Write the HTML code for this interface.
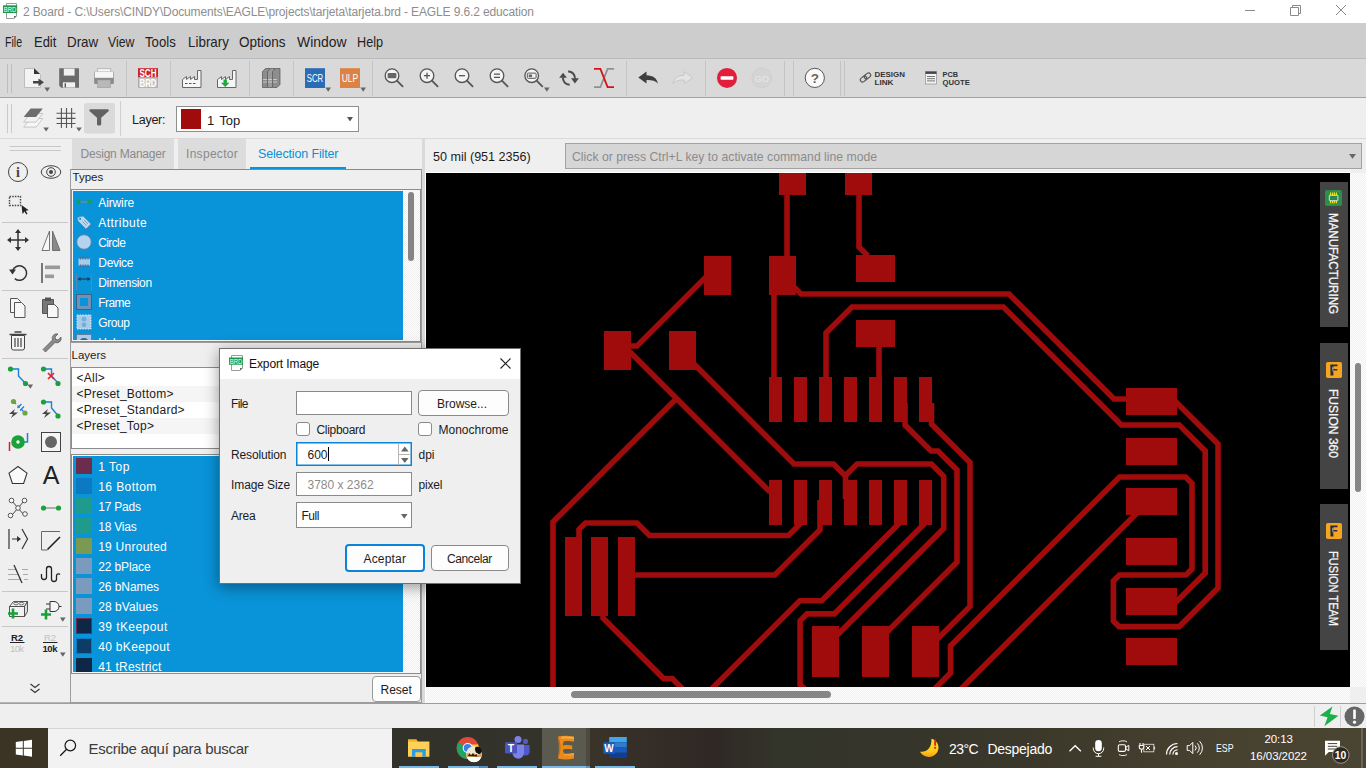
<!DOCTYPE html>
<html lang="en">
<head>
<meta charset="utf-8">
<title>2 Board - EAGLE 9.6.2 education</title>
<style>
*{box-sizing:border-box;margin:0;padding:0}
html,body{width:1366px;height:768px;overflow:hidden}
body{position:relative;background:#efefef;font-family:"Liberation Sans",sans-serif;font-size:12px;color:#1c1c1c;line-height:1}
.a{position:absolute}
.t{position:absolute;white-space:nowrap;line-height:1}
svg{position:absolute;overflow:visible}
/* title bar */
#title{left:0;top:0;width:1366px;height:23px;background:#fff}
/* menubar */
#menu{left:0;top:23px;width:1366px;height:36px;background:#cdcdcd;border-bottom:1px solid #b9b9b9}
#menu .t{top:10.500px;font-size:15px;color:#222;transform-origin:0 0}
/* toolbars */
#tb1{left:0;top:59px;width:1366px;height:39px;background:#d9d9d9;border-bottom:1px solid #a3a3a3}
#tb2{left:0;top:98px;width:1366px;height:41px;background:#efefef;border-bottom:1px solid #d9d9d9}
.sep{position:absolute;width:1px;background:#bcbcbc}
/* left tools */
#ltools{left:0;top:139px;width:70px;height:564px;background:#efefef;border-bottom:1px solid #b5b5b5}
.hs{position:absolute;height:1px;background:#c4c4c4;left:3px;width:65px}
/* panel */
#panel{left:70px;top:139px;width:352px;height:564px;background:#efefef}
.li{font-size:12px;color:#fff;letter-spacing:-.1px}
/* canvas */
#canvas{left:426px;top:173px;width:924px;height:514px;background:#000;overflow:hidden}
/* status */
#status{left:0;top:703px;width:1366px;height:25px;background:#efefef;border-top:1px solid #9d9d9d}
/* taskbar */
#task{left:0;top:728px;width:1366px;height:40px;background:linear-gradient(90deg,#3b3424 0,#3b3424 3.600%,#32322a 29%,#33332a 40%,#3a332a 43.500%,#2f2824 52%,#33342a 57%,#36352a 68%,#3f3b2c 80%,#474130 90%,#4a4432 100%)}
</style>
</head>
<body>
<!-- TITLE -->
<div id="title" class="a">
<svg style="left:3px;top:3px" width="15" height="16" viewBox="0 0 15 16"><path d="M3.500.500h10v12.500l-2.500 2.500h-7.500z" fill="#fff" stroke="#9a9a9a"/><path d="M13.500 13h-2.500v2.500z" fill="#666"/><rect x="0" y="2.300" width="14.200" height="7.700" fill="#1c9a4a"/><text x="7.100" y="8.700" font-size="6.800" font-family="Liberation Sans,sans-serif" fill="#fff" text-anchor="middle" textLength="12.500" lengthAdjust="spacingAndGlyphs">BRD</text></svg>
<span class="t" style="left:23px;top:6px;font-size:12px;color:#8d8d8d;letter-spacing:-0.13px">2 Board - C:\Users\CINDY\Documents\EAGLE\projects\tarjeta\tarjeta.brd - EAGLE 9.6.2 education</span>
<svg style="left:1245px;top:5px" width="102" height="11" viewBox="0 0 102 11" fill="none" stroke="#8a8a8a" stroke-width="1"><path d="M0 5.5h10"/><path d="M45.5 2.5h8v8h-8z"/><path d="M47.5 2.5v-2h8v8h-2"/><path d="M91 0l10 10M101 0l-10 10"/></svg>
</div>
<!-- MENU -->
<div id="menu" class="a">
<span class="t" style="left:5.3px;transform:scaleX(0.707)">File</span><span class="t" style="left:33.6px;transform:scaleX(0.864)">Edit</span><span class="t" style="left:66.6px;transform:scaleX(0.891)">Draw</span><span class="t" style="left:108px;transform:scaleX(0.818)">View</span><span class="t" style="left:145px;transform:scaleX(0.877)">Tools</span><span class="t" style="left:187.5px;transform:scaleX(0.893)">Library</span><span class="t" style="left:239px;transform:scaleX(0.9)">Options</span><span class="t" style="left:296.5px;transform:scaleX(0.929)">Window</span><span class="t" style="left:356.5px;transform:scaleX(0.844)">Help</span>
</div>
<!-- TB1 -->
<div id="tb1" class="a">
<svg style="left:0;top:-1px" width="1366" height="40" viewBox="0 0 1366 40" font-family="Liberation Sans,sans-serif">
<path d="M7.5 6v29M11.5 6v29" stroke="#bdbdbd"/>
<g stroke="#c3c3c3"><path d="M126.5 3v35M170.5 3v35M249.5 3v35M293.5 3v35M372.5 3v35M626.5 3v35M705.5 3v35M784.5 3v35M793.5 3v35M840.5 3v35M844.5 3v35"/></g>
<!-- new -->
<path d="M24.5 10.5h9.5l6.5 6v13h-16z" fill="#f3f3f3" stroke="#bdbdbd"/><path d="M34 10.3l6 5.6h-6z" fill="#333"/><path d="M33 23h5.5v-2.6l5.4 3.9-5.4 3.9v-2.6H33z" fill="#444"/><path d="M44.4 29.5h5.6l-2.8 4.2z" fill="#666"/>
<!-- save -->
<path d="M59.2 10.2h19.8v19.6H61.2l-2-2z" fill="#6b6b6b"/><rect x="63.8" y="10.6" width="10.8" height="7" fill="#f1f1f1"/><rect x="62.9" y="24.3" width="12.2" height="5.2" fill="#f1f1f1"/><rect x="64.6" y="25.3" width="1.4" height="4" fill="#555"/>
<!-- print -->
<rect x="97.5" y="10.5" width="13.2" height="7.5" fill="#f2f2f2" stroke="#bbb"/><rect x="94.2" y="13.6" width="19.6" height="12.4" rx="1" fill="#8a8a8a"/><rect x="94.8" y="13.6" width="18.4" height="6.2" fill="#f6f6f6"/><rect x="97.6" y="22" width="13" height="7.6" fill="#b8b8b8" stroke="#9a9a9a" stroke-width=".6"/>
<!-- sch/brd -->
<rect x="138" y="10.200" width="20" height="9.300" fill="#c9202a"/><rect x="138.400" y="19.500" width="19.200" height="9.800" fill="#c6c6c6" stroke="#a5a5a5" stroke-width=".8"/><text x="148" y="18.700" font-size="10" font-weight="700" fill="#fff" text-anchor="middle" textLength="17" lengthAdjust="spacingAndGlyphs">SCH</text><text x="148" y="28.700" font-size="10" font-weight="700" fill="#fff" text-anchor="middle" textLength="17" lengthAdjust="spacingAndGlyphs">BRD</text>
<!-- factory 1 -->
<path d="M182.5 29.5v-8l4-3v3l4-3v3l4-3v3h3v-9h3.5v17z" fill="#f6f6f6" stroke="#666" stroke-width="1"/><path d="M185 25.5h2.5M189 25.5h2.5M193 25.5h2.5" stroke="#555" stroke-width="1.2"/>
<!-- factory 2 -->
<path d="M217.5 29.5v-8l4-3v3l4-3v3l4-3v3h3v-9h3.5v17z" fill="#f6f6f6" stroke="#666" stroke-width="1"/><path d="M223.5 21.5h3.4v3.2h2.6l-4.3 4.4-4.3-4.4h2.6z" fill="#1faa3c"/>
<!-- books -->
<g stroke="#555" stroke-width=".7"><path d="M262.5 13.5l3-3h4.5v16l-3 3h-4.5z" fill="#8d8d8d"/><path d="M267.5 13.5l3-3h4.5v16l-3 3h-4.5z" fill="#9a9a9a"/><path d="M272.5 13.5l3-3h4.5v16l-3 3h-4.5z" fill="#8d8d8d"/></g><path d="M263 21.5h4M268 21.5h4M273 21.5h4M263 24h4M268 24h4M273 24h4" stroke="#d5d5d5" stroke-width=".8"/>
<!-- scr ulp -->
<rect x="305" y="10.2" width="20" height="19.8" fill="#2b6cb7"/><text x="315" y="24.2" font-size="10.5" fill="#fff" text-anchor="middle" textLength="16.5" lengthAdjust="spacingAndGlyphs">SCR</text><path d="M325.4 29.6h5.6l-2.8 4.2z" fill="#666"/>
<rect x="340" y="10.2" width="20" height="19.8" fill="#dc8242"/><text x="350" y="24.2" font-size="10.5" fill="#fff" text-anchor="middle" textLength="16.5" lengthAdjust="spacingAndGlyphs">ULP</text><path d="M360.4 29.6h5.6l-2.8 4.2z" fill="#666"/>
<!-- zoom icons -->
<g transform="translate(392 17.7)"><circle r="6.8" fill="#f4f4f4" stroke="#555" stroke-width="1.3"/><path d="M4.9 4.9L10.6 10.6" stroke="#555" stroke-width="1.8" stroke-linecap="round"/><rect x="-4.4" y="-2.8" width="8.8" height="5.4" rx="1" fill="#666"/></g>
<g transform="translate(427 17.7)"><circle r="6.8" fill="#f4f4f4" stroke="#555" stroke-width="1.3"/><path d="M4.9 4.9L10.6 10.6" stroke="#555" stroke-width="1.8" stroke-linecap="round"/><path d="M-3 0h6M0 -3v6" stroke="#555" stroke-width="1.3"/></g>
<g transform="translate(462 17.7)"><circle r="6.8" fill="#f4f4f4" stroke="#555" stroke-width="1.3"/><path d="M4.9 4.9L10.6 10.6" stroke="#555" stroke-width="1.8" stroke-linecap="round"/><path d="M-3 0h6" stroke="#555" stroke-width="1.3"/></g>
<g transform="translate(497 17.7)"><circle r="6.8" fill="#f4f4f4" stroke="#555" stroke-width="1.3"/><path d="M4.9 4.9L10.6 10.6" stroke="#555" stroke-width="1.8" stroke-linecap="round"/><path d="M-3 -1.6h6M-3 1.6h6" stroke="#555" stroke-width="1.3"/></g>
<g transform="translate(531.7 17.7)"><circle r="6.8" fill="#f4f4f4" stroke="#555" stroke-width="1.3"/><path d="M4.9 4.9L10.6 10.6" stroke="#555" stroke-width="1.8" stroke-linecap="round"/><rect x="-4.4" y="-2.6" width="8.8" height="5.2" rx="1" fill="none" stroke="#555" stroke-width="1"/><rect x="-3" y="-1.2" width="3.4" height="2.6" fill="#666"/></g><path d="M544 29.6h5.6l-2.8 4.2z" fill="#666"/>
<!-- refresh -->
<g fill="none" stroke="#4a4a4a" stroke-width="2"><path d="M568.100 13.600A6.600 6.600 0 0 1 575 20.600"/><path d="M569.700 26.700A6.600 6.600 0 0 1 563 19.400"/></g><path d="M571 20.300h7.900l-3.950 5.200z" fill="#4a4a4a"/><path d="M559.200 19.700h7.700l-3.850-4.900z" fill="#4a4a4a"/>
<!-- X -->
<path d="M614 10.900H607.600L600.400 29.100H594" fill="none" stroke="#8f8f8f" stroke-width="1.700"/><path d="M594 10.900H600.400L607.600 29.100H614" fill="none" stroke="#d41414" stroke-width="1.800"/>
<!-- undo redo -->
<path d="M638.3 19.6l8.2-6v3.6c6.5.2 10.4 3 11.3 8.2-2.600-2.700-6.200-3.600-11.300-3.400v3.600z" fill="#3d3d3d"/>
<path d="M692.500 19.600l-8.200-6v3.600c-6.500.2-10.400 3-11.300 8.200 2.600-2.700 6.200-3.600 11.300-3.400v3.600z" fill="#e4e4e4" stroke="#c2c2c2" stroke-width=".8"/>
<!-- stop go -->
<circle cx="727" cy="19.900" r="10" fill="#e01f3d"/><rect x="720.6" y="18.300" width="12.8" height="3.400" rx=".6" fill="#fff"/>
<circle cx="761.800" cy="19.900" r="10" fill="#d4d4d4" stroke="#cbcbcb" stroke-width=".6"/><text x="761.800" y="23.500" font-size="9.500" font-weight="700" fill="#e3e3e3" text-anchor="middle">GO</text>
<!-- help -->
<circle cx="814.800" cy="19.900" r="9.600" fill="#fafafa" stroke="#555" stroke-width="1"/><text x="814.800" y="24.600" font-size="13.500" font-weight="700" fill="#666" text-anchor="middle">?</text>
<!-- design link -->
<g fill="none" stroke="#555" stroke-width="1.100" transform="rotate(-38 865.500 19.500)"><rect x="859.500" y="17.300" width="7" height="4.400" rx="2.200"/><rect x="864.500" y="17.300" width="7" height="4.400" rx="2.200"/></g>
<text x="874.500" y="19.200" font-size="7.800" font-weight="700" fill="#333" textLength="30.500" lengthAdjust="spacingAndGlyphs">DESIGN</text><text x="874.500" y="26.600" font-size="7.800" font-weight="700" fill="#333" textLength="19" lengthAdjust="spacingAndGlyphs">LINK</text>
<!-- pcb quote -->
<rect x="925.500" y="13.500" width="11" height="12.500" fill="#f2f2f2" stroke="#999" stroke-width=".8"/><rect x="925.500" y="13.500" width="11" height="2.400" fill="#444"/><path d="M927 18.500h8M927 20.700h8M927 22.900h8" stroke="#666" stroke-width=".9"/>
<text x="942.600" y="19.200" font-size="7.800" font-weight="700" fill="#333" textLength="15.500" lengthAdjust="spacingAndGlyphs">PCB</text><text x="942.600" y="26.600" font-size="7.800" font-weight="700" fill="#333" textLength="27.300" lengthAdjust="spacingAndGlyphs">QUOTE</text>
</svg>
</div>
<!-- TB2 -->
<div id="tb2" class="a">
<svg style="left:0;top:0" width="420" height="41" viewBox="0 0 420 41">
<path d="M7.500 6v29M11.500 6v29" stroke="#c9c9c9"/>
<path d="M120.500 3v35" stroke="#cfcfcf"/>
<!-- layers -->
<path d="M30.600 20.500h12.200l-6.800 8.600H23.600z" fill="#f6f6f6" stroke="#bdbdbd" stroke-width=".8"/><path d="M30.600 15.500h12.200l-6.800 8.600H23.600z" fill="#f3f3f3" stroke="#bdbdbd" stroke-width=".8"/><path d="M30.600 10.500h12.200l-6.800 8.600H23.600z" fill="#6e6e6e"/><path d="M43.3 29.4h5.6l-2.8 4.2z" fill="#666"/>
<!-- grid -->
<path d="M61.400 10v20M66.500 10v20M71.600 10v20M56.500 15.200h19M56.500 20.400h19M56.500 25.500h19" stroke="#555" stroke-width="1.100"/><path d="M76.2 29.4h5.6l-2.8 4.2z" fill="#666"/>
<!-- filter -->
<rect x="84" y="5" width="31" height="30.600" rx="2" fill="#dadada"/><path d="M90.400 11.300h17.200c1.300 0 1.700 1.100.9 2l-7.300 6.500v6.400c0 1.800-4.200 1.800-4.200 0v-6.400l-7.300-6.500c-.8-.9-.4-2 .7-2z" fill="#626262"/>
</svg>
<span class="t" style="left:132px;top:16px;font-size:12.500px;color:#1c1c1c;letter-spacing:-.25px">Layer:</span>
<div class="a" style="left:176px;top:8px;width:183px;height:26px;background:#fff;border:1px solid #8f8f8f"></div>
<div class="a" style="left:181px;top:11px;width:20px;height:20px;background:#a00b0b"></div>
<span class="t" style="left:207px;top:15.500px;font-size:13px;word-spacing:2px;letter-spacing:-.1px">1 Top</span>
<svg style="left:347px;top:19px" width="6" height="5" viewBox="0 0 6 5"><path d="M0 0h6l-3 4.600z" fill="#555"/></svg>
</div>
<!-- LTOOLS -->
<div id="ltools" class="a">
<svg style="left:0;top:0" width="70" height="565" viewBox="0 139 70 565" font-family="Liberation Sans,sans-serif">
<path d="M9.500 146.500h51.500M9.500 150.500h51.500M2 222.500h66M2 290.500h66M2 358.500h66M2 591.500h66M2 626.500h66" stroke="#c8c8c8"/>
<!-- info / eye -->
<circle cx="18" cy="172" r="9.500" fill="none" stroke="#444" stroke-width="1"/><text x="18" y="177" font-size="14" font-weight="700" font-family="Liberation Serif,serif" text-anchor="middle" fill="#444">i</text>
<ellipse cx="51" cy="172" rx="9.800" ry="6.300" fill="none" stroke="#444" stroke-width="1"/><circle cx="51" cy="172" r="4.300" fill="none" stroke="#444" stroke-width="1"/><circle cx="51" cy="172" r="2" fill="#444"/>
<!-- select -->
<rect x="9.500" y="196.500" width="11" height="9" fill="none" stroke="#444" stroke-width="1.400" stroke-dasharray="1.500 1.200"/><path d="M21.500 205l1 9 2-2.600 1.800 3 1.200-.700-1.800-3 3-.500z" fill="#222"/>
<!-- move / mirror -->
<path d="M18 230.500v19M8.500 240h19" stroke="#333" stroke-width="1.500"/><path d="M18 229l3 4h-6zM18 251l3-4h-6zM7 240l4-3v6zM29 240l-4-3v6z" fill="#333"/>
<path d="M49.500 231v19.500h-7.500z" fill="#f8f8f8" stroke="#666" stroke-width=".9"/><path d="M52.500 231v19.500h7.500z" fill="#8a8a8a" stroke="#666" stroke-width=".9"/>
<!-- rotate / align -->
<path d="M12.500 271a7.200 7.200 0 1 1 2.300 7.600" fill="none" stroke="#333" stroke-width="1.500"/><path d="M9 269.500h7l-3.500 5z" fill="#333"/>
<path d="M42 263v20" stroke="#444" stroke-width="1.400"/><rect x="45" y="265.500" width="15" height="3.600" fill="#9a9a9a"/><rect x="45" y="274.500" width="9" height="3.600" fill="#9a9a9a"/>
<!-- copy / paste -->
<path d="M10.500 298.500h7l3 3v11h-10z" fill="#f7f7f7" stroke="#555"/><path d="M14.500 302.500h7l3.500 3.500v11.500h-10.500z" fill="#f7f7f7" stroke="#555"/>
<path d="M42.500 299.500h11v14h-11z" fill="#777" stroke="#555"/><rect x="45" y="297.500" width="6" height="3.500" fill="#555"/><path d="M47.500 304.500h7l3.500 3.500v9.500h-10.500z" fill="#f7f7f7" stroke="#555"/>
<!-- trash / wrench -->
<path d="M11.500 335.500h13v12.500a2 2 0 0 1-2 2h-9a2 2 0 0 1-2-2z" fill="#f4f4f4" stroke="#444"/><path d="M9.500 334.500h17M14.500 332h7" stroke="#444" stroke-width="1.600"/><path d="M15 338v9M18 338v9M21 338v9" stroke="#444" stroke-width="1.200"/>
<path d="M43 349.500l9.500-9.500a4.500 4.500 0 0 1 5.500-6l-3 3 .700 2.300 2.300.700 3-3a4.500 4.500 0 0 1-6 5.500l-9.500 9.500z" fill="#8a8a8a" stroke="#555" stroke-width=".7"/>
<!-- route / ripup -->
<path d="M11 369h7.500v7l6.500 7" fill="none" stroke="#1e7fd6" stroke-width="1.400"/><circle cx="10.500" cy="369" r="2.600" fill="#19a23a"/><circle cx="25.500" cy="383.500" r="2.600" fill="#19a23a"/><path d="M27.500 384.500h5.600l-2.800 4.200z" fill="#666"/>
<path d="M44 369h7.500v7l6.500 7" fill="none" stroke="#1e7fd6" stroke-width="1.400"/><circle cx="43.500" cy="369" r="2.600" fill="#19a23a"/><circle cx="58" cy="383.500" r="2.600" fill="#19a23a"/><path d="M48 373l6 6M54 373l-6 6" stroke="#e8202a" stroke-width="1.700"/>
<!-- row 8 -->
<path d="M14 402l11 11" stroke="#1e7fd6" stroke-width="1.300" stroke-dasharray="3 2"/><path d="M17.500 408l4-4M20 410.500l4-4" stroke="#1e7fd6" stroke-width="1.300"/><circle cx="13.500" cy="401.500" r="2.600" fill="#6da544"/><circle cx="25" cy="413" r="2.600" fill="#6da544"/><path d="M15 409l-6 5h4l-2 4 7-5.500h-4.500z" fill="#444"/>
<path d="M44 402h7.500v6l6 7" fill="none" stroke="#1e7fd6" stroke-width="1.400"/><circle cx="43.500" cy="402" r="2.600" fill="#19a23a"/><circle cx="58" cy="416" r="2.600" fill="#19a23a"/><path d="M48 409l-6 5h4l-2 4 7-5.500h-4.500z" fill="#444"/>
<!-- row 9 -->
<path d="M9.500 451v-9" stroke="#d0222c" stroke-width="1.500"/><path d="M27.500 433v9h-4" fill="none" stroke="#1e7fd6" stroke-width="1.500"/><circle cx="18" cy="442" r="6.800" fill="#19a23a"/><circle cx="18" cy="442" r="1.700" fill="#fff"/>
<rect x="41.500" y="432.500" width="19" height="19" fill="#f6f6f6" stroke="#444"/><circle cx="51" cy="442" r="6" fill="#666"/>
<!-- row 10 -->
<path d="M18 466.500l9 6.600-3.400 10.400H12.400L9 473.100z" fill="#fafafa" stroke="#333" stroke-width="1.100"/>
<text x="51" y="484" font-size="25" fill="#222" text-anchor="middle">A</text>
<!-- row 11 -->
<path d="M12 501l12 14M24 501l-12 14" stroke="#444" stroke-width="1"/><g fill="#fafafa" stroke="#444" stroke-width=".9"><circle cx="11.500" cy="500.500" r="2.300"/><circle cx="24.500" cy="500.500" r="2.300"/><circle cx="10.500" cy="515.500" r="2.300"/><circle cx="25" cy="514" r="2.300"/><circle cx="18" cy="508" r="2.300"/></g>
<path d="M44 508h14" stroke="#888" stroke-width="1.300"/><circle cx="43.500" cy="508" r="2.600" fill="#19a23a"/><circle cx="58.500" cy="508" r="2.600" fill="#19a23a"/>
<!-- row 12 -->
<path d="M9 529v20M12 539h8" stroke="#333" stroke-width="1.200" fill="none"/><path d="M17 536l4 3-4 3z" fill="#333"/><path d="M22 529l5.500 10-5.500 10" fill="none" stroke="#333" stroke-width="1.200"/>
<path d="M60 531.500h-18.500v18.500h6" fill="none" stroke="#666" stroke-width="1"/><path d="M60 537l-12.500 12.500" stroke="#222" stroke-width="1.600"/>
<!-- row 13 -->
<path d="M8 569.500h8M8 574.500h10M8 579.500h12M22 569.500h6M23 574.500h5M24 579.500h4" stroke="#aaa" stroke-width="1.200"/><path d="M14 565l8 18" stroke="#333" stroke-width="1.300"/>
<path d="M41.500 574v3a2.500 2.500 0 0 0 5 0v-8a2.500 2.500 0 0 1 5 0v10a2.500 2.500 0 0 0 5 0v-3.500a2 2 0 0 1 3.500-1" fill="none" stroke="#222" stroke-width="1.300"/>
<!-- row 14 -->
<path d="M9.500 606.500l4-5h14l-3 5z" fill="#f2f2f2" stroke="#444" stroke-width=".9"/><path d="M9.500 606.500h15v10h-15z" fill="#f2f2f2" stroke="#444" stroke-width=".9"/><path d="M24.500 606.500l3-5v10l-3 5z" fill="#ddd" stroke="#444" stroke-width=".9"/><ellipse cx="16" cy="603.600" rx="2.300" ry="1.300" fill="none" stroke="#444" stroke-width=".8"/><ellipse cx="21.500" cy="603.600" rx="2.300" ry="1.300" fill="none" stroke="#444" stroke-width=".8"/><path d="M8 613.500h10M13 608.500v10" stroke="#19a23a" stroke-width="2.600"/>
<path d="M50 601.500h4a5 5 0 0 1 0 10h-4zM46 604h4M46 609h4M59 606.500h2.500" fill="#f6f6f6" stroke="#333" stroke-width="1"/><path d="M41 614.500h10M46 609.500v10" stroke="#19a23a" stroke-width="2.600"/><path d="M60 617.500h5.600l-2.800 4.200z" fill="#666"/>
<!-- row 15 -->
<text x="17" y="640.500" font-size="9.500" font-weight="700" fill="#222" text-anchor="middle" textLength="12">R2</text><path d="M10 642.500h14.500" stroke="#222" stroke-width="1"/><text x="17" y="652" font-size="9.500" fill="#c2c2c2" text-anchor="middle" textLength="14">10k</text>
<text x="50" y="640.500" font-size="9.500" fill="#c2c2c2" text-anchor="middle" textLength="12">R2</text><path d="M43 642.500h14.500" stroke="#222" stroke-width="1"/><text x="50" y="652" font-size="9.500" font-weight="700" fill="#222" text-anchor="middle" textLength="15">10k</text><path d="M60 652.500h5.600l-2.800 4.200z" fill="#666"/>
<!-- chevrons -->
<path d="M30.500 684l4.500 3.500 4.500-3.500M30.500 689l4.500 3.500 4.500-3.500" fill="none" stroke="#333" stroke-width="1.100"/>
</svg>
</div>
<!-- PANEL -->
<div id="panel" class="a">
<div class="a" style="left:2px;top:0;width:102px;height:30px;background:#dcdcdc"></div><span class="t" style="left:10.500px;top:9px;font-size:12px;color:#8a8a8a;letter-spacing:-.22px">Design Manager</span>
<div class="a" style="left:108px;top:0;width:68px;height:30px;background:#dcdcdc"></div><span class="t" style="left:116px;top:9px;font-size:12px;color:#8a8a8a;letter-spacing:.3px">Inspector</span>
<span class="t" style="left:188px;top:9px;font-size:12.500px;color:#0c8fd6;letter-spacing:-.15px">Selection Filter</span>
<div class="a" style="left:180px;top:28px;width:96px;height:3px;background:#0993d8"></div>
<!-- types frame -->
<div class="a" style="left:0;top:30px;width:352px;height:174px;border:1px solid #9c9c9c;border-top-color:#8a8a8a"></div>
<span class="t" style="left:2.500px;top:33px;font-size:11.500px">Types</span>
<div class="a" style="left:1px;top:50px;width:350px;height:153px;border:1px solid #8c8c8c;background:conic-gradient(#fff 25%,#efefef 0 50%,#fff 0 75%,#efefef 0) 0 0/2px 2px"></div>
<div class="a" style="left:3px;top:52px;width:330px;height:149px;background:#0993d8;overflow:hidden">
<svg style="left:3px;top:3px" width="16" height="16" viewBox="0 0 16 16"><path d="M3 8h10" stroke="#7f8c96" stroke-width="1.200"/><circle cx="2.500" cy="8" r="2.200" fill="#17a04d"/><circle cx="13.500" cy="8" r="2.200" fill="#17a04d"/></svg><span class="t li" style="left:25.3px;top:6px;letter-spacing:-0.13px">Airwire</span>
<svg style="left:3px;top:23px" width="16" height="16" viewBox="0 0 16 16"><path d="M1.500 3.500l5.500-1.500 8 8-5 5-8-8z" fill="#b9d7ee" stroke="#6d8fb0" stroke-width=".9"/><circle cx="4.200" cy="5" r="1" fill="#0993d8"/><path d="M6.500 7.500l4 4M8 6l4 4" stroke="#6d8fb0" stroke-width=".8"/></svg><span class="t li" style="left:25.3px;top:26px;letter-spacing:0.45px">Attribute</span>
<svg style="left:3px;top:43px" width="16" height="16" viewBox="0 0 16 16"><circle cx="8" cy="8" r="7.300" fill="#b4d3ee" stroke="#5d7fa3" stroke-width=".9"/></svg><span class="t li" style="left:25.3px;top:46px;letter-spacing:-0.63px">Circle</span>
<svg style="left:3px;top:63px" width="16" height="16" viewBox="0 0 16 16"><rect x="2.500" y="4.500" width="11.500" height="7" fill="#a9cbe8"/><path d="M4.500 2.500v3M7 2.500v3M9.500 2.500v3M12 2.500v3M4.500 10.500v3M7 10.500v3M9.500 10.500v3M12 10.500v3" stroke="#4f7197" stroke-width="1.300"/></svg><span class="t li" style="left:25.3px;top:66px;letter-spacing:-0.32px">Device</span>
<svg style="left:3px;top:83px" width="16" height="16" viewBox="0 0 16 16"><path d="M.500 0v16M15.500 0v16" stroke="#5d86ad" stroke-width="1"/><path d="M3 5h10" stroke="#1d3550" stroke-width="1.100"/><path d="M1.500 5l3-2v4zM14.500 5l-3-2v4z" fill="#1d3550"/></svg><span class="t li" style="left:25.3px;top:86px;letter-spacing:-0.36px">Dimension</span>
<svg style="left:3px;top:103px" width="16" height="16" viewBox="0 0 16 16"><rect x=".5" y=".5" width="15" height="15" fill="#6f93b8" stroke="#3f5f83"/><rect x="4" y="4" width="8" height="8" fill="#0993d8"/></svg><span class="t li" style="left:25.3px;top:106px;letter-spacing:-0.6px">Frame</span>
<svg style="left:3px;top:123px" width="16" height="16" viewBox="0 0 16 16"><rect x="1" y="1" width="14" height="14" fill="#a9cbe8" stroke="#d8e8f5" stroke-width="1" stroke-dasharray="1.500 1.200"/><circle cx="8" cy="5.200" r="2.400" fill="#6fb0e0"/><circle cx="8" cy="10.800" r="2.400" fill="#6fb0e0"/></svg><span class="t li" style="left:25.3px;top:126px;letter-spacing:-0.43px">Group</span>
<svg style="left:3px;top:143px" width="16" height="16" viewBox="0 0 16 16"><rect x=".5" y=".5" width="15" height="15" fill="#a9cbe8" stroke="#5d7fa3"/><circle cx="8" cy="9" r="5" fill="#3f5f83"/></svg><span class="t li" style="left:25.3px;top:146px;letter-spacing:-0.3px">Hole</span>
</div>
<div class="a" style="left:338px;top:53px;width:6px;height:69px;border-radius:3px;background:#858585"></div>
<!-- layers -->
<div class="a" style="left:0;top:204px;width:352px;height:360px;border:1px solid #9c9c9c;border-top:none"></div>
<span class="t" style="left:1.500px;top:210.500px;font-size:11.500px">Layers</span>
<div class="a" style="left:1px;top:228px;width:350px;height:82px;border:1px solid #8c8c8c;background:#fff;overflow:hidden">
<div class="a" style="left:0;top:2px;width:348px;height:16px;background:#fff"><span class="t" style="left:4.500px;top:2px;font-size:12px;color:#1c1c1c;letter-spacing:.25px">&lt;All&gt;</span></div>
<div class="a" style="left:0;top:18px;width:348px;height:16px;background:#f5f5f5"><span class="t" style="left:4.500px;top:2px;font-size:12px;color:#1c1c1c;letter-spacing:.25px">&lt;Preset_Bottom&gt;</span></div>
<div class="a" style="left:0;top:34px;width:348px;height:16px;background:#fff"><span class="t" style="left:4.500px;top:2px;font-size:12px;color:#1c1c1c;letter-spacing:.25px">&lt;Preset_Standard&gt;</span></div>
<div class="a" style="left:0;top:50px;width:348px;height:16px;background:#f5f5f5"><span class="t" style="left:4.500px;top:2px;font-size:12px;color:#1c1c1c;letter-spacing:.25px">&lt;Preset_Top&gt;</span></div>
</div>
<div class="a" style="left:1px;top:315px;width:350px;height:220px;border:1px solid #8c8c8c;background:conic-gradient(#fff 25%,#efefef 0 50%,#fff 0 75%,#efefef 0) 0 0/2px 2px"></div>
<div class="a" style="left:3px;top:317px;width:330px;height:216px;background:#0993d8;overflow:hidden">
<div class="a" style="left:3px;top:2px;width:16px;height:16px;background:#6c2c4b"></div><span class="t li" style="left:25.200px;top:5px;letter-spacing:0.52px">1 Top</span>
<div class="a" style="left:3px;top:22px;width:16px;height:16px;background:#0b7ac2"></div><span class="t li" style="left:25.200px;top:25px;letter-spacing:0.43px">16 Bottom</span>
<div class="a" style="left:3px;top:42px;width:16px;height:16px;background:#1e9b8c"></div><span class="t li" style="left:25.200px;top:45px;letter-spacing:-0.21px">17 Pads</span>
<div class="a" style="left:3px;top:62px;width:16px;height:16px;background:#1e9b8c"></div><span class="t li" style="left:25.200px;top:65px;letter-spacing:-0.21px">18 Vias</span>
<div class="a" style="left:3px;top:82px;width:16px;height:16px;background:#7a9a52"></div><span class="t li" style="left:25.200px;top:85px;letter-spacing:0.25px">19 Unrouted</span>
<div class="a" style="left:3px;top:102px;width:16px;height:16px;background:#7a9bbd"></div><span class="t li" style="left:25.200px;top:105px;letter-spacing:-0.11px">22 bPlace</span>
<div class="a" style="left:3px;top:122px;width:16px;height:16px;background:#7a9bbd"></div><span class="t li" style="left:25.200px;top:125px;letter-spacing:-0.06px">26 bNames</span>
<div class="a" style="left:3px;top:142px;width:16px;height:16px;background:#7a9bbd"></div><span class="t li" style="left:25.200px;top:145px;letter-spacing:0.07px">28 bValues</span>
<div class="a" style="left:3px;top:162px;width:16px;height:16px;background:#0f2747 radial-gradient(#2a5a8c .55px,transparent .7px) 0 0/2px 2px;border:1px solid #6c2c4b"></div><span class="t li" style="left:25.200px;top:165px;letter-spacing:0.43px">39 tKeepout</span>
<div class="a" style="left:3px;top:182px;width:16px;height:16px;background:#0b3d66 radial-gradient(#1c7fc4 .55px,transparent .7px) 0 0/2px 2px;border:1px solid #0b7ac2"></div><span class="t li" style="left:25.200px;top:185px;letter-spacing:0.33px">40 bKeepout</span>
<div class="a" style="left:3px;top:202px;width:16px;height:16px;background:#0f2747 radial-gradient(#24507e .55px,transparent .7px) 0 0/2px 2px;border:1px solid #0f2747"></div><span class="t li" style="left:25.200px;top:205px;letter-spacing:0.22px">41 tRestrict</span>
</div>
<div class="a" style="left:302px;top:537px;width:49px;height:26px;border:1px solid #9a9a9a;border-radius:4px;background:#fdfdfd"></div><span class="t" style="left:310.500px;top:545px;font-size:12px">Reset</span>
</div>
<div class="a" style="left:422px;top:139px;width:3px;height:564px;background:#dadada"></div>
<span class="t" style="left:433px;top:151px;font-size:12.600px;color:#1c1c1c;letter-spacing:-.02px">50 mil (951 2356)</span>
<div class="a" style="left:565px;top:143px;width:797px;height:26px;background:#d6d6d6;border:1px solid #a2a2a2"></div>
<span class="t" style="left:572px;top:151px;font-size:12.200px;color:#8b8b8b;letter-spacing:.02px">Click or press Ctrl+L key to activate command line mode</span>
<svg style="left:1349px;top:154px" width="7" height="5" viewBox="0 0 7 5"><path d="M0 0h7l-3.500 4.800z" fill="#666"/></svg>
<!-- CANVAS -->
<div id="canvas" class="a">
<svg style="left:0;top:0" width="924" height="514" viewBox="426 173 924 514"><g fill="#a00b0b"><rect x="779" y="173" width="27" height="22"/><rect x="845" y="173" width="27" height="22"/><rect x="769" y="256" width="27" height="39"/><rect x="704" y="256" width="27" height="39"/><rect x="856" y="255" width="39" height="27"/><rect x="604" y="331" width="27" height="39"/><rect x="669" y="331" width="27" height="39"/><rect x="856" y="320" width="39" height="27"/><rect x="1126" y="388" width="51" height="27"/><rect x="1126" y="438" width="51" height="27"/><rect x="1126" y="488" width="51" height="27"/><rect x="1126" y="538" width="51" height="27"/><rect x="1126" y="588" width="51" height="27"/><rect x="1126" y="638" width="51" height="27"/><rect x="769" y="377" width="13" height="45"/><rect x="769" y="480" width="13" height="45"/><rect x="794" y="377" width="13" height="45"/><rect x="794" y="480" width="13" height="45"/><rect x="819" y="377" width="13" height="45"/><rect x="819" y="480" width="13" height="45"/><rect x="844" y="377" width="13" height="45"/><rect x="844" y="480" width="13" height="45"/><rect x="869" y="377" width="13" height="45"/><rect x="869" y="480" width="13" height="45"/><rect x="894" y="377" width="13" height="45"/><rect x="894" y="480" width="13" height="45"/><rect x="919" y="377" width="13" height="45"/><rect x="919" y="480" width="13" height="45"/><rect x="565" y="537" width="17" height="79"/><rect x="591" y="537" width="17" height="79"/><rect x="618" y="537" width="17" height="79"/><rect x="812" y="626" width="27" height="51"/><rect x="862" y="626" width="27" height="51"/><rect x="912" y="626" width="27" height="51"/></g><g fill="none" stroke="#a00b0b" stroke-width="5.600" stroke-linejoin="miter"><path d="M787 190V260"/><path d="M859 190V247L868 256"/><path d="M792 285L801 294H1009L1114 399H1130"/><path d="M1174 400L1218 444V588L1179.300 626.600H1119L1113.400 621V581L1119.500 575H1186L1192 569V483.500L1185.600 477H1119.600L950.500 646V673L935 688.500"/><path d="M774 292V380"/><path d="M826 380V333L852 307H1003.400L1121.400 425H1179.300L1205.200 451V573L1175 603"/><path d="M879 345V380"/><path d="M708 275L637 346H628"/><path d="M628 350L676 398L769 491H773"/><path d="M676 399L553 522V690"/><path d="M693 363L794 464H833.500L845.250 475.750L857 464H931.400L943.700 476.300V528.500L837 635.200"/><path d="M845.500 476V499"/><path d="M905 403V425L931 451H938L957 470V562L887 632"/><path d="M931.500 403V424L970 462.500V606.400L936.700 639.700"/><path d="M579 540V529.500L585.500 523H637L649.500 535.500H788.500L801 523"/><path d="M633 575H774.800L820 529.800V500"/><path d="M603 612V618L663.600 678.600H672.300L683 689.300"/><path d="M900.600 522L821.800 600.800H799.800L710 690.600"/><path d="M926.100 522L834.200 613.900H807L800.100 620.800V684.500L806 690.500"/><path d="M1137 513L959 691"/></g></svg>
</div>
<div class="a" style="left:1320px;top:182px;width:27.500px;height:145px;background:#444"><svg style="left:5px;top:8px" width="17" height="16" viewBox="0 0 17 16"><rect width="17" height="16" rx="1.800" fill="#2c8c4b"/><path d="M1 1.500l3.500 4M8.500 0v16M1 14h7.500M10 1.500h6" stroke="#1ea448" stroke-width="1" fill="none"/><path d="M5.500 2.400v3M7.500 2.400v3M9.400 2.400v3M11.400 2.400v3M5.500 10.600v2.600M7.500 10.600v2.600M9.400 10.600v2.600M11.400 10.600v2.600" stroke="#f3df0a" stroke-width="1.200"/><rect x="4.300" y="5.300" width="8.600" height="5.400" rx=".6" fill="#2f8550" stroke="#e4efe6" stroke-width=".9"/></svg><span class="t" style="left:13px;top:31.4px;font-size:13.500px;color:#f6f6f6;-webkit-text-stroke:.3px #f6f6f6;transform-origin:0 0;transform:rotate(90deg) scale(0.858,1) translate(0,-50%)">MANUFACTURING</span></div>
<div class="a" style="left:1320px;top:343px;width:27.500px;height:146px;background:#444"><svg style="left:5.500px;top:19px" width="16" height="16" viewBox="0 0 16 16"><rect width="16" height="16" rx="1.800" fill="#f5a520"/><path d="M4.300 2.600h7.200v1.700H7.400v2.700h3.900v1.600H7.400v5H4.500z" fill="#2b2e38"/><path d="M6.200 5.200c.8-.4 1.200-.2 1.200.4v5.600c-.9-1.800-1.300-3.900-1.200-6z" fill="#a9abb0"/></svg><span class="t" style="left:13px;top:45.6px;font-size:13.500px;color:#f6f6f6;-webkit-text-stroke:.3px #f6f6f6;transform-origin:0 0;transform:rotate(90deg) scale(0.893,1) translate(0,-50%)">FUSION 360</span></div>
<div class="a" style="left:1320px;top:504px;width:27.500px;height:146px;background:#444"><svg style="left:5.500px;top:19px" width="16" height="16" viewBox="0 0 16 16"><rect width="16" height="16" rx="1.800" fill="#f5a520"/><path d="M4.300 2.600h7.200v1.700H7.400v2.700h3.900v1.600H7.400v5H4.500z" fill="#2b2e38"/><path d="M6.200 5.200c.8-.4 1.200-.2 1.200.4v5.600c-.9-1.800-1.300-3.900-1.200-6z" fill="#a9abb0"/></svg><span class="t" style="left:13px;top:47px;font-size:13.500px;color:#f6f6f6;-webkit-text-stroke:.3px #f6f6f6;transform-origin:0 0;transform:rotate(90deg) scale(0.815,1) translate(0,-50%)">FUSION TEAM</span></div>
<div class="a" style="left:1350px;top:173px;width:16px;height:514px;background:conic-gradient(#fff 25%,#efefef 0 50%,#fff 0 75%,#efefef 0) 0 0/2px 2px"></div>
<div class="a" style="left:1355px;top:363px;width:6px;height:129px;border-radius:3px;background:#868686"></div>
<div class="a" style="left:426px;top:687px;width:924px;height:16px;background:conic-gradient(#fff 25%,#efefef 0 50%,#fff 0 75%,#efefef 0) 0 0/2px 2px"></div>
<div class="a" style="left:425px;top:172px;width:925px;height:1px;background:#fff"></div><div class="a" style="left:425px;top:172px;width:1px;height:531px;background:#fff"></div>
<div class="a" style="left:571px;top:691px;width:260px;height:7px;border-radius:3.500px;background:#868686"></div>
<div class="a" style="left:219px;top:348px;width:302px;height:236px;background:#efefef;border:1px solid #707070;box-shadow:0 3px 14px rgba(0,0,0,.4)">
<div class="a" style="left:0;top:0;width:300px;height:30px;background:#fff"></div>
<svg style="left:9px;top:6px" width="16" height="17" viewBox="0 0 16 17"><path d="M2.500.5h11v12.500l-2.500 2.500h-8.500z" fill="#fff" stroke="#9a9a9a"/><path d="M13.500 13h-2.500v2.500z" fill="#666"/><rect x="0" y="2.500" width="14" height="7.200" fill="#1c9a4a"/><text x="7" y="8.600" font-size="6.500" font-family="Liberation Sans,sans-serif" fill="#fff" text-anchor="middle" textLength="12.500" lengthAdjust="spacingAndGlyphs">BRD</text></svg>
<span class="t" style="left:29px;top:9px;font-size:12px;color:#111;letter-spacing:-.1px">Export Image</span>
<svg style="left:280px;top:9px" width="11" height="11" viewBox="0 0 11 11"><path d="M.5.5l10 10M10.500.5l-10 10" stroke="#222" stroke-width="1.100"/></svg>
<span class="t" style="left:11px;top:49px;letter-spacing:-.6px">File</span>
<div class="a" style="left:76px;top:42px;width:116px;height:24px;background:#fff;border:1px solid #8a8a8a"></div>
<div class="a" style="left:198px;top:41px;width:91px;height:26px;background:#fdfdfd;border:1px solid #8a8a8a;border-radius:4px"></div><span class="t" style="left:217px;top:49px">Browse...</span>
<div class="a" style="left:76px;top:73px;width:14px;height:14px;background:#fff;border:1px solid #8a8a8a;border-radius:3px"></div><span class="t" style="left:96.500px;top:75px;letter-spacing:-.3px">Clipboard</span>
<div class="a" style="left:198px;top:73px;width:14px;height:14px;background:#fff;border:1px solid #8a8a8a;border-radius:3px"></div><span class="t" style="left:218.500px;top:75px">Monochrome</span>
<span class="t" style="left:11px;top:100px;letter-spacing:-.15px">Resolution</span>
<div class="a" style="left:76px;top:93px;width:116px;height:24px;background:#fff;border:1px solid #0a84d8;box-shadow:inset 0 0 0 .5px #0a84d8"></div>
<span class="t" style="left:87.500px;top:100px">600</span><div class="a" style="left:107.500px;top:98px;width:1px;height:14px;background:#000"></div>
<div class="a" style="left:178px;top:94px;width:1px;height:22px;background:#b5b5b5"></div><div class="a" style="left:178px;top:105px;width:13px;height:1px;background:#b5b5b5"></div>
<svg style="left:181px;top:96.500px" width="8" height="17" viewBox="0 0 8 17"><path d="M0 5.500h7.600l-3.800-5zM0 12h7.600l-3.800 5z" fill="#666"/></svg>
<span class="t" style="left:198.500px;top:100px">dpi</span>
<span class="t" style="left:11px;top:130px;letter-spacing:-.1px">Image Size</span>
<div class="a" style="left:76px;top:123px;width:116px;height:24px;background:#fff;border:1px solid #8a8a8a"></div><span class="t" style="left:87.500px;top:130px;color:#8c8c8c">3780 x 2362</span>
<span class="t" style="left:198.500px;top:130px;letter-spacing:-.2px">pixel</span>
<span class="t" style="left:11px;top:161px;letter-spacing:-.25px">Area</span>
<div class="a" style="left:76px;top:153px;width:116px;height:26px;background:#fff;border:1px solid #8a8a8a"></div><span class="t" style="left:81.500px;top:161px;letter-spacing:-.5px">Full</span>
<svg style="left:181px;top:165px" width="7" height="5" viewBox="0 0 7 5"><path d="M0 0h6.600l-3.300 4.800z" fill="#666"/></svg>
<div class="a" style="left:125px;top:195px;width:80px;height:28px;background:#fdfdfd;border:2px solid #0a84d8;border-radius:4px"></div><span class="t" style="left:143.500px;top:204px;letter-spacing:.18px">Aceptar</span>
<div class="a" style="left:211px;top:196px;width:78px;height:26px;background:#fdfdfd;border:1px solid #8a8a8a;border-radius:4px"></div><span class="t" style="left:227px;top:204px;letter-spacing:-.4px">Cancelar</span>
</div>
<!-- STATUS -->
<div id="status" class="a">
<div class="sep" style="left:1314px;top:2px;height:21px;background:#cfcfcf"></div><div class="sep" style="left:1340px;top:2px;height:21px;background:#cfcfcf"></div>
<svg style="left:1319px;top:2px" width="20" height="21" viewBox="0 0 20 21"><path d="M13.500.5L.8 9.600l7.800 1.700-3.300 8.900L19.400 9.800l-8.600-1.700z" fill="#1bb04a"/></svg>
<svg style="left:1344px;top:2px" width="21" height="21" viewBox="0 0 21 21"><circle cx="10.500" cy="10.500" r="10" fill="#666"/><rect x="9.200" y="3.600" width="2.600" height="9.400" rx=".8" fill="#fff"/><circle cx="10.500" cy="16.200" r="1.600" fill="#fff"/></svg>
</div>
<!-- TASK -->
<div id="task" class="a">
<svg style="left:0;top:0" width="1366" height="40" viewBox="0 728 1366 40" font-family="Liberation Sans,sans-serif">
<!-- start -->
<path d="M15.800 742.100l7-1v6.700h-7zM23.800 741l8.200-1.200v8h-8.200zM15.800 748.800h7v6.700l-7-1zM23.800 748.800h8.200v8l-8.200-1.200z" fill="#fff"/>
<!-- search box -->
<rect x="48" y="728" width="344" height="40" fill="#f2f2f2"/><rect x="48" y="728" width="344" height="1" fill="#d5d5d5"/>
<circle cx="70.300" cy="745.500" r="5.300" fill="none" stroke="#1a1a1a" stroke-width="1.200"/><path d="M66.600 749.300L60.200 755.700" stroke="#1a1a1a" stroke-width="1.300"/>
<!-- eagle highlight -->
<rect x="542" y="728" width="44.500" height="40" fill="#5a5a4f"/><rect x="586.500" y="728" width="3.500" height="40" fill="#4c4b42"/>
<!-- underlines -->
<g fill="#76b9ed"><rect x="399" y="766" width="40" height="2"/><rect x="448" y="766" width="31.500" height="2"/><rect x="497" y="766" width="40" height="2"/><rect x="542" y="766" width="44.500" height="2"/><rect x="595" y="766" width="40" height="2"/></g><rect x="479.500" y="766" width="8.500" height="2" fill="#4d8fc2"/><rect x="586.500" y="766" width="3.500" height="2" fill="#5b9bd0"/>
<!-- explorer -->
<path d="M408 740.200h8.600l1.200 1.300h11.600v15.200H408z" fill="#ffd257"/><path d="M408 739.200h8.400l1 1.600v1H408z" fill="#f5b51f"/><path d="M412 749h13.800v7.800h-3.600v-4.200h-6.600v4.200H412z" fill="#2e9be6"/><rect x="415.600" y="752.600" width="6.600" height="4.100" fill="#ffc83d"/>
<!-- chrome -->
<circle cx="467.700" cy="748" r="11" fill="#de4b3d"/><path d="M467.700 748L458.200 742.500A11 11 0 0 0 467.700 759L473.200 749.500z" fill="#1fa463"/><path d="M467.700 748l5.500 1.500L467.700 759A11 11 0 0 0 478.200 744.500H467.700z" fill="#fcc934"/><circle cx="467.700" cy="748" r="5" fill="#fff"/><circle cx="467.700" cy="748" r="4" fill="#3b80e8"/>
<circle cx="474" cy="754.300" r="7.900" fill="#fff"/><path d="M466.400 752.500a7.900 7.900 0 0 1 7.600-6.100c1.500 0 3 .4 4.200 1.200l-2.800 6.400z" fill="#efe6cf"/><path d="M475.500 747c3.200-1.200 5.800.8 6.300 4.500l-1.800 3-3.500-1.500c-1.500-2-2-4-1-6z" fill="#15100a"/><path d="M466.200 753.500l3.500-.8 1.500 1.500 3-1 3 1.500 4.500-1.200.2 3.500h-15.500z" fill="#cfa35c"/><path d="M468 756l1.500-2.500 1.500 2 2-2.500 1.500 2.500 2-1.500 1 2.500z" fill="#2a1a0a"/><path d="M466.800 757.200h14.400a7.900 7.900 0 0 1-14.400 0z" fill="#fff"/>
<!-- teams -->
<circle cx="525.500" cy="741.400" r="2.600" fill="#5059c9"/><path d="M521 745h8.600v6.500a4 4 0 0 1-8 0z" fill="#5059c9"/><circle cx="518" cy="739.600" r="3.500" fill="#7b83eb"/><path d="M512.500 744.500h11.500v8.500a5.700 5.700 0 0 1-11.500 0z" fill="#7b83eb"/><rect x="505" y="742.300" width="12" height="11.200" rx="1" fill="#4b53bc"/><text x="511" y="751.900" font-size="10.500" font-weight="700" fill="#fff" text-anchor="middle">T</text>
<!-- eagle -->
<path d="M558 736.400c5.300-1 10.700-.9 16 .1v5.200c-3.800-.7-7.200-.8-10.300-.3-.5 1.300-.7 2.600-.8 4 3.300-.6 6.300-.5 9.300.1v4c-3-.6-6-.6-9.200 0 .1 1.500.4 2.900 1 4.200 3.200.5 6.500.3 10-.4v5.300c-5.400 1.200-10.700 1.200-16 0 1.300-7.500 1.300-14.800 0-22.200z" fill="#e98a1b"/><path d="M558 736.400c1.800 7 1.800 15.200 0 22.200 3.200-6.400 3.400-15.800 0-22.200z" fill="#c76a0f"/><path d="M561 736.800c4.300-.6 8.600-.4 13 .3v2.200c-4.200-.8-8.400-1-12.300-.5z" fill="#f6ab43"/><path d="M563.500 753.500c3.300.5 6.700.3 10.500-.4v1.800c-3.700.8-7 .9-10 .4z" fill="#f4a234"/>
<!-- word -->
<path d="M609.200 737h17.600v5.300h-17.600z" fill="#41a5ee"/><path d="M609.200 742.300h17.600v5.200h-17.600z" fill="#2b7cd3"/><path d="M609.200 747.500h17.600v5.300h-17.600z" fill="#185abd"/><path d="M609.200 752.800h17.600v5.200h-17.600z" fill="#103f91"/><rect x="603.200" y="742.300" width="11.800" height="11.400" rx=".8" fill="#185abd"/><text x="609.100" y="751.800" font-size="10" font-weight="700" fill="#fff" text-anchor="middle">W</text>
<!-- moon -->
<defs><linearGradient id="mg" x1="0" y1="0" x2="0" y2="1"><stop offset="0" stop-color="#ffe23a"/><stop offset=".7" stop-color="#ffc814"/><stop offset="1" stop-color="#f79a1e"/></linearGradient></defs>
<path d="M931.500 738.800c4.500 1.300 7.200 5 7 9.200-.3 5-4.300 8.800-9.500 8.900-3.700.1-7-1.800-9-5.200 6.300 1 11.800-3.300 11.500-12.900z" fill="url(#mg)"/><rect x="934.200" y="739.200" width="1.900" height="6.600" rx=".9" fill="#e62117"/><circle cx="935.100" cy="747.800" r="1.100" fill="#e62117"/>
<!-- chevron -->
<path d="M1069.500 751.300l5.700-5.600 5.700 5.600" fill="none" stroke="#fff" stroke-width="1.300"/>
<!-- mic -->
<rect x="1095.200" y="740" width="6.600" height="11.300" rx="3.300" fill="#fff"/><path d="M1093.300 747.500v1a5.200 5.200 0 0 0 10.400 0v-1M1098.500 753.700v2.600M1095.600 756.300h5.800" fill="none" stroke="#fff" stroke-width="1"/>
<!-- camera -->
<rect x="1118.300" y="744.800" width="7.200" height="6.600" rx="1.500" fill="none" stroke="#fff" stroke-width="1.100"/><path d="M1125.800 747.200l3-1.800v5.400l-3-1.800z" fill="none" stroke="#fff" stroke-width="1"/><path d="M1119 741.800c2-1.300 6-1.300 8 0M1119 754.600c2 1.300 6 1.300 8 0" fill="none" stroke="#e8e8e8" stroke-width="1"/>
<!-- battery -->
<path d="M1140 743v2.500M1143 743v2.500M1139.300 745.500h4.400v1.500a2.200 2.200 0 0 1-4.400 0zM1141.500 749.200v3.600" fill="none" stroke="#fff" stroke-width="1.100"/><rect x="1143.800" y="744.300" width="10" height="7.500" fill="none" stroke="#d8d8d8" stroke-width=".9"/><path d="M1154.500 746.500v3" stroke="#d8d8d8" stroke-width="1.200"/><path d="M1146 746l4 4M1150 746l-4 4" stroke="#fff" stroke-width="1"/>
<!-- wifi -->
<g fill="none" stroke="#fff" stroke-width="1.200"><path d="M1166.500 754.500a11 11 0 0 1 11-11"/><path d="M1169.700 754.500a7.800 7.800 0 0 1 7.800-7.800"/><path d="M1172.900 754.500a4.600 4.600 0 0 1 4.600-4.600"/></g><circle cx="1176.500" cy="753.600" r="1.500" fill="#fff"/>
<!-- volume -->
<path d="M1187.200 745.600h2.400l3.200-3.200v11.200l-3.200-3.200h-2.400z" fill="none" stroke="#fff" stroke-width="1"/><g fill="none" stroke="#fff" stroke-width="1"><path d="M1195 745.500a3.500 3.500 0 0 1 0 5"/><path d="M1197.300 743.300a6.600 6.600 0 0 1 0 9.400"/><path d="M1199.600 741.200a9.600 9.600 0 0 1 0 13.600"/></g>
<!-- notification -->
<path d="M1325 740.700h15v11.300h-11.200l-3.800 3.800z" fill="#fff"/><path d="M1327.800 743.600h9.400M1327.800 746.300h9.400M1327.800 749h9.400" stroke="#474130" stroke-width="1"/><circle cx="1340.800" cy="755" r="8.300" fill="#2b2922" stroke="#9a988e" stroke-width="1"/>
<text x="1340.600" y="759.200" font-size="11" font-weight="700" fill="#fff" text-anchor="middle" textLength="11.500" lengthAdjust="spacingAndGlyphs">10</text>
<rect x="1361.500" y="728" width="1" height="40" fill="#8a887e"/>
</svg>
<span class="t" style="left:88.500px;top:13px;font-size:15px;color:#3c3c3c;letter-spacing:-.28px">Escribe aquí para buscar</span>
<span class="t" style="left:949px;top:14px;font-size:14px;color:#fff;letter-spacing:-.55px">23°C</span>
<span class="t" style="left:987.500px;top:14px;font-size:14px;color:#fff;letter-spacing:-.28px">Despejado</span>
<span class="t" style="left:1215.500px;top:14.500px;font-size:11px;color:#fff;transform-origin:0 0;transform:scaleX(.8)">ESP</span>
<span class="t" style="left:1264.500px;top:6px;font-size:11.500px;color:#fff;letter-spacing:-.1px">20:13</span>
<span class="t" style="left:1250px;top:23px;font-size:11.500px;color:#fff;letter-spacing:-.06px">16/03/2022</span>
</div>
</body>
</html>
